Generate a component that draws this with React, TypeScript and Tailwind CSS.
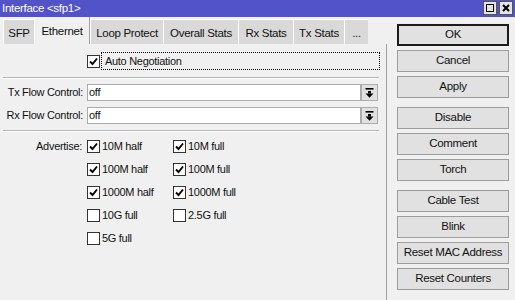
import React from "react";

const TABS = [
  { label: "SFP", w: "w-[31px]" },
  { label: "Ethernet", w: "w-[56px]", active: true },
  { label: "Loop Protect", w: "w-[73px]" },
  { label: "Overall Stats", w: "w-[75px]" },
  { label: "Rx Stats", w: "w-[55px]" },
  { label: "Tx Stats", w: "w-[51px]" },
  { label: "...", w: "w-[24px]" },
];

const ADVERTISE: [string, boolean, string | null, boolean][] = [
  ["10M half", true, "10M full", true],
  ["100M half", true, "100M full", true],
  ["1000M half", true, "1000M full", true],
  ["10G full", false, "2.5G full", false],
  ["5G full", false, null, false],
];

const BUTTON_GROUPS = [
  ["OK", "Cancel", "Apply"],
  ["Disable", "Comment", "Torch"],
  ["Cable Test", "Blink", "Reset MAC Address", "Reset Counters"],
];

function Check({ checked }: { checked: boolean }) {
  return (
    <span className="flex size-[13px] shrink-0 items-center justify-center border border-[#333] bg-white">
      {checked && (
        <svg width="11" height="11" viewBox="0 0 11 11">
          <polyline
            points="2,5.5 4.5,8 9,2.5"
            fill="none"
            stroke="#000"
            strokeWidth="1.9"
          />
        </svg>
      )}
    </span>
  );
}

function DropButton() {
  return (
    <span className="flex h-[17px] w-[17px] shrink-0 items-center justify-center border border-[#adadad] bg-[#e1e1e1]">
      <svg width="9" height="10" viewBox="0 0 9 10">
        <rect x="0.5" y="0" width="8" height="1.6" fill="#000" />
        <rect x="3" y="3" width="3" height="2.5" fill="#000" />
        <polygon points="0.5,5.5 8.5,5.5 4.5,9.8" fill="#000" />
      </svg>
    </span>
  );
}

function Separator() {
  return (
    <div className="mr-[7px] ml-[3px]">
      <div className="h-px bg-[#b4b4b4]" />
      <div className="h-px bg-white" />
    </div>
  );
}

function FlowRow({ label }: { label: string }) {
  return (
    <div className="flex items-center">
      <span className="w-[84px] pr-[1px] text-right">{label}</span>
      <div className="ml-[3px] flex h-[17px] w-[274px] items-center border border-[#ababab] bg-white pl-[1px]">
        off
      </div>
      <DropButton />
    </div>
  );
}

export default function App() {
  return (
    <div className="h-[300px] w-[515px] overflow-hidden bg-[#f0f0f0] font-['Liberation_Sans',Arial,sans-serif] text-[11px] tracking-[-0.3px] text-[#111]">
      {/* title bar */}
      <div className="flex h-[17px] items-center justify-between bg-[#5353c9] pr-[2px] pl-[2px] text-white">
        <span className="pt-[1px] text-[11.5px]">Interface &lt;sfp1&gt;</span>
        <div className="flex gap-[2px] self-start pt-[1px]">
          <span className="flex size-[14px] items-center justify-center border border-[#555] bg-[#e4e4e4]">
            <span className="size-[8px] border-[1.5px] border-black" />
          </span>
          <span className="flex size-[14px] items-center justify-center border border-[#555] bg-[#e4e4e4]">
            <svg width="8" height="8" viewBox="0 0 8 8">
              <path d="M1 1 L7 7 M7 1 L1 7" stroke="#000" strokeWidth="2" />
            </svg>
          </span>
        </div>
      </div>

      <div className="flex">
        {/* left: tabs + panel */}
        <div className="flex w-[387px] flex-col">
          <div className="flex h-[27px] items-end pl-[3px]">
            {TABS.map((t) =>
              t.active ? (
                <div
                  key={t.label}
                  className={`flex h-[27px] ${t.w} items-center justify-center border-r border-l border-r-[#a0a0a0] border-l-white bg-[#f0f0f0] pt-[2px] text-[11.5px]`}
                >
                  {t.label}
                </div>
              ) : (
                <div
                  key={t.label}
                  className={`flex h-[25px] ${t.w} items-center justify-center border-t border-l border-white bg-[#d9d9d9] pt-[3px] text-[11.5px]`}
                >
                  {t.label}
                </div>
              ),
            )}
          </div>

          <div className="flex h-[256px] flex-col border-r border-r-[#a0a0a0]">
            {/* auto negotiation */}
            <div className="mt-[8px] flex h-[18px] items-center pl-[87px]">
              <Check checked />
              <div className="ml-[1px] flex h-[18px] w-[279px] items-center border border-dotted border-black pl-[3px]">
                Auto Negotiation
              </div>
            </div>

            <div className="mt-[7px]">
              <Separator />
            </div>

            <div className="mt-[5px] flex flex-col gap-[6px]">
              <FlowRow label="Tx Flow Control:" />
              <FlowRow label="Rx Flow Control:" />
            </div>

            <div className="mt-[6px]">
              <Separator />
            </div>

            {/* advertise */}
            <div className="mt-[3px] flex">
              <span className="flex h-[23px] w-[84px] items-center justify-end pr-[2px]">
                Advertise:
              </span>
              <div className="ml-[3px] flex flex-col">
                {ADVERTISE.map(([a, ac, b, bc]) => (
                  <div key={a} className="flex h-[23px] items-center">
                    <div className="flex w-[86px] items-center gap-[2px]">
                      <Check checked={ac} />
                      <span>{a}</span>
                    </div>
                    {b && (
                      <div className="flex items-center gap-[2px]">
                        <Check checked={bc} />
                        <span>{b}</span>
                      </div>
                    )}
                  </div>
                ))}
              </div>
            </div>
          </div>
        </div>

        {/* right: buttons */}
        <div className="ml-[10px] flex w-[112px] flex-col gap-[9px] pt-[7px]">
          {BUTTON_GROUPS.map((g, gi) => (
            <div key={gi} className="flex flex-col gap-[4px]">
              {g.map((b) => (
                <div
                  key={b}
                  className={`flex h-[22px] items-center justify-center bg-[#e1e1e1] text-[11.5px] ${
                    b === "OK"
                      ? "border-2 border-[#1a1a1a]"
                      : "border border-[#9c9c9c]"
                  }`}
                >
                  {b}
                </div>
              ))}
            </div>
          ))}
        </div>
      </div>
    </div>
  );
}
